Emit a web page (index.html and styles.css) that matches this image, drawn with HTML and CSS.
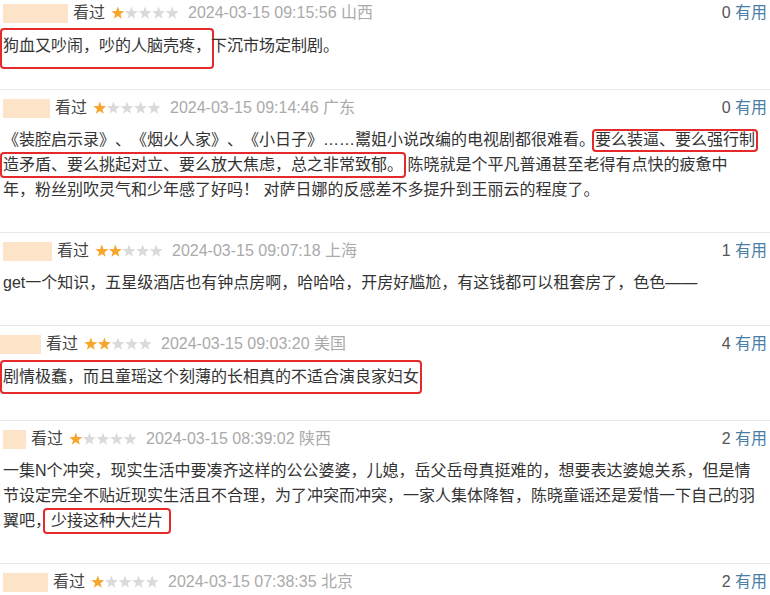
FILE: index.html
```html
<!DOCTYPE html>
<html>
	<head>
		<meta charset="utf-8" />
		<meta name="viewport" content="width=device-width, initial-scale=1">
		<title>短评</title>
		<link rel="stylesheet" href="styles.css">
	</head>
	<body>
		<svg class="defs" width="0" height="0">
			<defs>
				<polygon id="star" points="7,0.3 8.7,4.95 13.66,5.14 9.76,8.2 11.11,12.96 7,10.2 2.89,12.96 4.24,8.2 0.34,5.14 5.3,4.95" />
			</defs>
		</svg>

		<div class="list">
			<div class="comment">
				<div class="info">
					<span class="name" style="width: 65px"></span>
					<span class="seen">看过</span>
					<svg class="stars" width="68" height="14" viewBox="0 0 70 14">
						<use href="#star" class="on" x="0" /><use href="#star" x="14" /><use href="#star" x="28" /><use href="#star" x="42" /><use href="#star" x="56" />
					</svg>
					<span class="time">2024-03-15 09:15:56 山西</span>
					<span class="vote"><span class="num">0</span> <a href="#">有用</a></span>
				</div>
				<p class="text boxed"><span class="mark m1">狗血又吵闹，吵的人脑壳疼，</span>下沉市场定制剧。</p>
			</div>

			<div class="comment">
				<div class="info">
					<span class="name" style="width: 47px"></span>
					<span class="seen">看过</span>
					<svg class="stars" width="68" height="14" viewBox="0 0 70 14">
						<use href="#star" class="on" x="0" /><use href="#star" x="14" /><use href="#star" x="28" /><use href="#star" x="42" /><use href="#star" x="56" />
					</svg>
					<span class="time">2024-03-15 09:14:46 广东</span>
					<span class="vote"><span class="num">0</span> <a href="#">有用</a></span>
				</div>
				<p class="text">《装腔启示录》、《烟火人家》、《小日子》……鬻姐小说改编的电视剧都很难看。<span class="mark m2">要么装逼、要么强行制</span><span class="mark m3">造矛盾、要么挑起对立、要么放大焦虑，总之非常致郁。</span> 陈晓就是个平凡普通甚至老得有点快的疲惫中年，粉丝别吹灵气和少年感了好吗！ 对萨日娜的反感差不多提升到王丽云的程度了。</p>
			</div>

			<div class="comment">
				<div class="info">
					<span class="name" style="width: 49px"></span>
					<span class="seen">看过</span>
					<svg class="stars" width="68" height="14" viewBox="0 0 70 14">
						<use href="#star" class="on" x="0" /><use href="#star" class="on" x="14" /><use href="#star" x="28" /><use href="#star" x="42" /><use href="#star" x="56" />
					</svg>
					<span class="time">2024-03-15 09:07:18 上海</span>
					<span class="vote"><span class="num">1</span> <a href="#">有用</a></span>
				</div>
				<p class="text">get一个知识，五星级酒店也有钟点房啊，哈哈哈，开房好尴尬，有这钱都可以租套房了，色色——</p>
			</div>

			<div class="comment">
				<div class="info">
					<span class="name flush" style="width: 41px"></span>
					<span class="seen">看过</span>
					<svg class="stars" width="68" height="14" viewBox="0 0 70 14">
						<use href="#star" class="on" x="0" /><use href="#star" class="on" x="14" /><use href="#star" x="28" /><use href="#star" x="42" /><use href="#star" x="56" />
					</svg>
					<span class="time">2024-03-15 09:03:20 美国</span>
					<span class="vote"><span class="num">4</span> <a href="#">有用</a></span>
				</div>
				<p class="text boxed"><span class="mark m4">剧情极蠢，而且童瑶这个刻薄的长相真的不适合演良家妇女</span></p>
			</div>

			<div class="comment">
				<div class="info">
					<span class="name" style="width: 23px"></span>
					<span class="seen">看过</span>
					<svg class="stars" width="68" height="14" viewBox="0 0 70 14">
						<use href="#star" class="on" x="0" /><use href="#star" x="14" /><use href="#star" x="28" /><use href="#star" x="42" /><use href="#star" x="56" />
					</svg>
					<span class="time">2024-03-15 08:39:02 陕西</span>
					<span class="vote"><span class="num">2</span> <a href="#">有用</a></span>
				</div>
				<p class="text">一集N个冲突，现实生活中要凑齐这样的公公婆婆，儿媳，岳父岳母真挺难的，想要表达婆媳关系，但是情节设定完全不贴近现实生活且不合理，为了冲突而冲突，一家人集体降智，陈晓童谣还是爱惜一下自己的羽翼吧，<span class="mark m5">少接这种大烂片</span></p>
			</div>

			<div class="comment">
				<div class="info">
					<span class="name" style="width: 45px"></span>
					<span class="seen">看过</span>
					<svg class="stars" width="68" height="14" viewBox="0 0 70 14">
						<use href="#star" class="on" x="0" /><use href="#star" x="14" /><use href="#star" x="28" /><use href="#star" x="42" /><use href="#star" x="56" />
					</svg>
					<span class="time">2024-03-15 07:38:35 北京</span>
					<span class="vote"><span class="num">2</span> <a href="#">有用</a></span>
				</div>
			</div>
		</div>
	</body>
</html>
```

FILE: styles.css
```css
* {
	padding: 0;
	margin: 0;
	text-decoration: none;
}

body {
	background-color: #fff;
	font-family: "Liberation Sans", "Noto Sans CJK SC", sans-serif;
	font-size: 16px;
	color: #333;
	overflow: hidden;
	text-spacing-trim: space-all;
}

.defs {
	position: absolute;
}

.comment {
	padding: 8px 3px 30px;
	border-bottom: 1px solid #e8e8e8;
}

.comment:first-child {
	padding-top: 3px;
}

.info {
	display: flex;
	align-items: center;
	height: 20px;
	line-height: 20px;
}

.name {
	display: block;
	height: 19px;
	background-color: #fde4c9;
	margin-right: 5px;
}

.name.flush {
	margin-left: -3px;
}

.seen {
	color: #444;
	margin-right: 6px;
}

.stars {
	display: block;
	margin-right: 9px;
}

.stars use {
	fill: #dadada;
}

.stars use.on {
	fill: #f7a52b;
}

.time {
	color: #aaa;
}

.vote {
	margin-left: auto;
	color: #555;
}

.vote a {
	color: #4a7ea6;
}

.text {
	width: 754px;
	margin-top: 9px;
	line-height: 25px;
	text-spacing-trim: space-all;
}

.text.boxed {
	line-height: 27px;
}

.mark {
	border: 2px solid #e42a2b;
	border-radius: 4px;
}

.m1 {
	padding: 7px 1px 13px;
	margin: 0 -3px;
}

.m2 {
	padding: 0 1px 2px;
	margin: 0 -3px;
}

.m3 {
	padding: 2px 1px 3px;
	margin: 0 -3px;
}

.m4 {
	padding: 6px 1px 7px;
	margin: 0 -3px;
}

.m5 {
	padding: 2px 6px 3px;
	margin: 0 -8px;
}
```
